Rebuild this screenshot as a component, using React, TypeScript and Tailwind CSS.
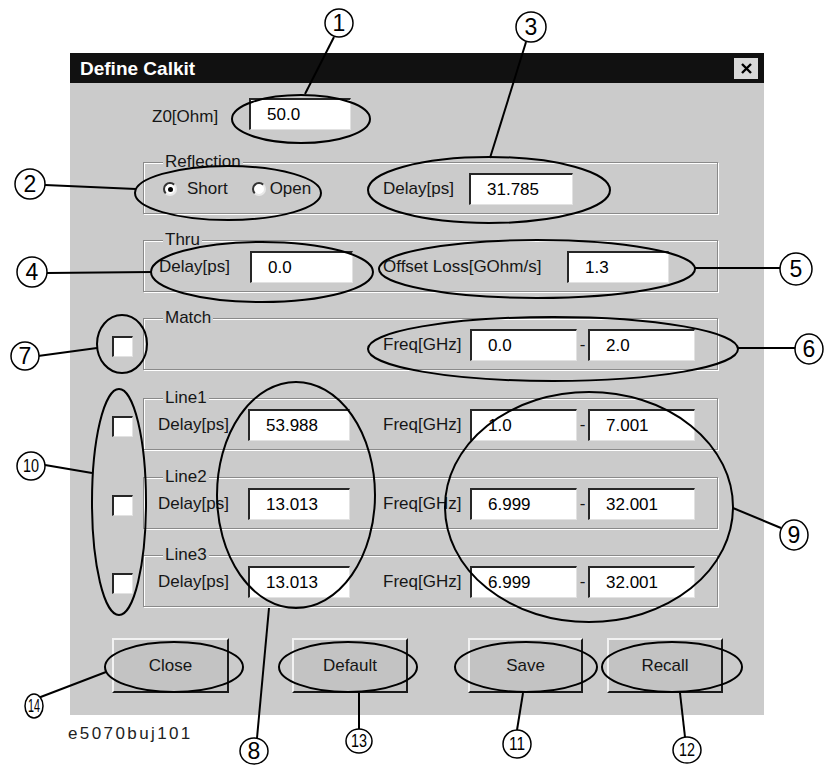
import React from 'react';

// sunken white edit box
function Field({ value, w }: { value: string; w: string }) {
    return (
        <div
            className={`h-[32px] shrink-0 bg-white border-t-2 border-l-2 border-r border-b border-t-[#262626] border-l-[#262626] border-r-[#e2e2e2] border-b-[#e2e2e2] flex items-center pl-[16px] text-black ${w}`}
        >
            {value}
        </div>
    );
}

function Check() {
    return (
        <div className="w-[21px] h-[21px] mt-[4px] bg-white border-t-2 border-l-2 border-r border-b border-t-[#262626] border-l-[#262626] border-r-[#e2e2e2] border-b-[#e2e2e2]" />
    );
}

function Radio({ on }: { on?: boolean }) {
    return (
        <div className="w-[14px] h-[14px] shrink-0 rounded-full bg-white border-2 border-t-[#333] border-l-[#333] border-r-[#e8e8e8] border-b-[#e8e8e8] flex items-center justify-center">
            {on && <div className="w-[5px] h-[5px] rounded-full bg-black" />}
        </div>
    );
}

function Group({ title, children }: { title: string; children?: React.ReactNode }) {
    return (
        <div className="relative h-[52px] w-[575px] shrink-0 border border-[#8a8a8a] shadow-[inset_1px_1px_0_#ffffff,1px_1px_0_#ffffff] flex items-center pt-[2px]">
            <span className="absolute -top-[11px] left-[19px] px-[2px] bg-[#cbcbcb] leading-[20px]">{title}</span>
            {children}
        </div>
    );
}

function LineGroup({ title, delay, f1, f2 }: { title: string; delay: string; f1: string; f2: string }) {
    return (
        <Group title={title}>
            <span className="w-[90px] ml-[14px] shrink-0">Delay[ps]</span>
            <Field value={delay} w="w-[102px]" />
            <span className="w-[87px] ml-[33px] shrink-0">Freq[GHz]</span>
            <Field value={f1} w="w-[107px]" />
            <span className="w-[11px] text-center shrink-0">-</span>
            <Field value={f2} w="w-[107px]" />
        </Group>
    );
}

function Btn({ label, cls }: { label: string; cls: string }) {
    return (
        <div
            className={`h-[55px] shrink-0 bg-[#c3c3c3] border-t-2 border-l-2 border-t-[#f2f2f2] border-l-[#f2f2f2] border-r-2 border-b-2 border-r-[#1a1a1a] border-b-[#1a1a1a] flex items-center justify-center ${cls}`}
        >
            {label}
        </div>
    );
}

const ellipses = [
    { cx: 301, cy: 119, rx: 69, ry: 24 },
    { cx: 228, cy: 193, rx: 93, ry: 27 },
    { cx: 489, cy: 190, rx: 121, ry: 33 },
    { cx: 262, cy: 272, rx: 111, ry: 30 },
    { cx: 537, cy: 269, rx: 158, ry: 29 },
    { cx: 553, cy: 349, rx: 185, ry: 32 },
    { cx: 122, cy: 344, rx: 25, ry: 29 },
    { cx: 296, cy: 495, rx: 79, ry: 113 },
    { cx: 589, cy: 507, rx: 144, ry: 115 },
    { cx: 119, cy: 502, rx: 27, ry: 113 },
    { cx: 174, cy: 667, rx: 69, ry: 25 },
    { cx: 348, cy: 667, rx: 69, ry: 25 },
    { cx: 526, cy: 667, rx: 71, ry: 25 },
    { cx: 672, cy: 667, rx: 70, ry: 25 },
];

const leaders = [
    [334, 37, 305, 94],
    [45, 185, 136, 189],
    [526, 42, 490, 158],
    [47, 273, 152, 272],
    [780, 268, 695, 268],
    [796, 348, 738, 348],
    [38, 356, 97, 348],
    [269, 608, 257, 738],
    [733, 508, 781, 528],
    [45, 465, 92, 473],
    [523, 693, 517, 730],
    [680, 693, 685, 737],
    [359, 693, 359, 730],
    [38, 698, 106, 672],
];

const marks = [
    { n: '1', cx: 339, cy: 23, rx: 14, ry: 14 },
    { n: '2', cx: 30, cy: 184, rx: 15, ry: 15 },
    { n: '3', cx: 531, cy: 27, rx: 15, ry: 15 },
    { n: '4', cx: 32, cy: 272, rx: 15, ry: 15 },
    { n: '5', cx: 796, cy: 269, rx: 16, ry: 16 },
    { n: '6', cx: 809, cy: 349, rx: 14, ry: 15 },
    { n: '7', cx: 25, cy: 356, rx: 14, ry: 14 },
    { n: '8', cx: 254, cy: 751, rx: 14, ry: 13 },
    { n: '9', cx: 794, cy: 535, rx: 14, ry: 15 },
    { n: '10', cx: 31, cy: 466, rx: 14, ry: 14 },
    { n: '11', cx: 517, cy: 744, rx: 14, ry: 14 },
    { n: '12', cx: 687, cy: 750, rx: 14, ry: 13 },
    { n: '13', cx: 359, cy: 741, rx: 13, ry: 12 },
    { n: '14', cx: 34, cy: 706, rx: 9, ry: 12 },
];

export default function App() {
    return (
        <div className="relative w-[824px] h-[765px] bg-white overflow-hidden font-['Liberation_Sans',Arial,sans-serif] text-[17px] text-[#161616]">
            {/* dialog */}
            <div className="ml-[70px] mt-[53px] w-[694px] flex flex-col">
                <div className="h-[30px] bg-[#111111] flex items-center justify-between pl-[10px] pr-[6px]">
                    <span className="text-white font-bold text-[19px] leading-none">Define Calkit</span>
                    <div className="w-[24px] h-[21px] bg-[#d9d9d9] flex items-center justify-center">
                        <svg width="13" height="13" viewBox="0 0 13 13">
                            <path d="M2 2 L11 11 M11 2 L2 11" stroke="#000" strokeWidth="2.4" />
                        </svg>
                    </div>
                </div>

                <div className="bg-[#cbcbcb] flex flex-col pb-[22px]">
                    <div className="flex items-center mt-[15px] pl-[82px]">
                        <span className="w-[97px] shrink-0 pt-[6px]">Z0[Ohm]</span>
                        <Field value="50.0" w="w-[102px]" />
                    </div>

                    <div className="flex items-center mt-[32px] pl-[73px]">
                        <Group title="Reflection">
                            <div className="w-[239px] shrink-0 flex items-center pl-[19px]">
                                <Radio on />
                                <span className="ml-[10px]">Short</span>
                                <div className="ml-[24px]">
                                    <Radio />
                                </div>
                                <span className="ml-[4px]">Open</span>
                            </div>
                            <span className="w-[86px] shrink-0">Delay[ps]</span>
                            <Field value="31.785" w="w-[104px]" />
                        </Group>
                    </div>

                    <div className="flex items-center mt-[26px] pl-[73px]">
                        <Group title="Thru">
                            <span className="w-[91px] ml-[15px] shrink-0">Delay[ps]</span>
                            <Field value="0.0" w="w-[103px]" />
                            <span className="w-[184px] ml-[30px] shrink-0">Offset Loss[GOhm/s]</span>
                            <Field value="1.3" w="w-[102px]" />
                        </Group>
                    </div>

                    <div className="flex items-center mt-[26px] pl-[42px]">
                        <div className="w-[21px] mr-[10px]">
                            <Check />
                        </div>
                        <Group title="Match">
                            <span className="w-[87px] ml-[239px] shrink-0">Freq[GHz]</span>
                            <Field value="0.0" w="w-[107px]" />
                            <span className="w-[11px] text-center shrink-0">-</span>
                            <Field value="2.0" w="w-[107px]" />
                        </Group>
                    </div>

                    <div className="flex items-center mt-[28px] pl-[42px]">
                        <div className="w-[21px] mr-[10px]">
                            <Check />
                        </div>
                        <LineGroup title="Line1" delay="53.988" f1="1.0" f2="7.001" />
                    </div>

                    <div className="flex items-center mt-[27px] pl-[42px]">
                        <div className="w-[21px] mr-[10px]">
                            <Check />
                        </div>
                        <LineGroup title="Line2" delay="13.013" f1="6.999" f2="32.001" />
                    </div>

                    <div className="flex items-center mt-[26px] pl-[42px]">
                        <div className="w-[21px] mr-[10px]">
                            <Check />
                        </div>
                        <LineGroup title="Line3" delay="13.013" f1="6.999" f2="32.001" />
                    </div>

                    <div className="flex mt-[31px] pl-[42px]">
                        <Btn label="Close" cls="w-[117px]" />
                        <Btn label="Default" cls="w-[116px] ml-[63px]" />
                        <Btn label="Save" cls="w-[115px] ml-[60px]" />
                        <Btn label="Recall" cls="w-[116px] ml-[24px]" />
                    </div>
                </div>
            </div>

            <div className="ml-[68px] mt-[9px] text-[17px] tracking-[2.4px] text-[#222] leading-[20px]">e5070buj101</div>

            {/* callout annotations drawn over the screenshot */}
            <svg className="absolute inset-0 pointer-events-none" width="824" height="765" viewBox="0 0 824 765">
                {ellipses.map((e, i) => (
                    <ellipse key={i} cx={e.cx} cy={e.cy} rx={e.rx} ry={e.ry} fill="none" stroke="#000" strokeWidth="2" />
                ))}
                {leaders.map((l, i) => (
                    <line key={i} x1={l[0]} y1={l[1]} x2={l[2]} y2={l[3]} stroke="#000" strokeWidth="2" />
                ))}
                {marks.map((m) => (
                    <g key={m.n}>
                        <ellipse cx={m.cx} cy={m.cy} rx={m.rx} ry={m.ry} fill="#fff" stroke="#000" strokeWidth="1.5" />
                        <text
                            x={m.cx}
                            y={m.cy + (m.n.length > 1 ? 6 : 8)}
                            textAnchor="middle"
                            fontFamily="'Liberation Sans', Arial, sans-serif"
                            fontSize={m.n.length > 1 ? 18 : 23}
                            fill="#000"
                            textLength={m.n.length > 1 ? (m.rx < 10 ? 12 : 16) : undefined}
                            lengthAdjust="spacingAndGlyphs"
                        >
                            {m.n}
                        </text>
                    </g>
                ))}
            </svg>
        </div>
    );
}
